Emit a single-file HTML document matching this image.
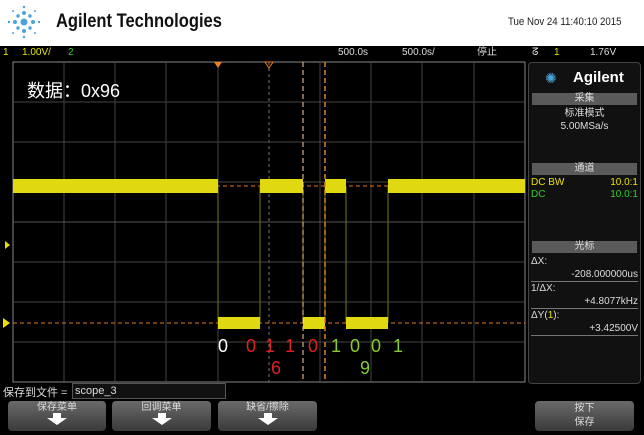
<!DOCTYPE html>
<html><head><meta charset="utf-8"><style>
body{margin:0;width:644px;height:435px;background:#fff;position:relative;overflow:hidden;font-family:"Liberation Sans","Noto Sans CJK SC",sans-serif}
.a{position:absolute}
.btn{position:absolute;top:401px;height:30px;background:linear-gradient(#6a6a6a,#3a3a3a);border-radius:4px;color:#ddd;font-size:10px;text-align:center;line-height:13px}
.arr{width:0;height:0;border-left:10px solid transparent;border-right:10px solid transparent;border-top:7px solid #fff;margin:4px auto 0;position:relative}
.arr:before{content:"";position:absolute;left:-4px;top:-12px;width:8px;height:5px;background:#fff}
.ph{background:#5a5a5a;color:#ddd;font-size:10px;text-align:center;height:12px;line-height:12px;margin:0 3px}
</style></head><body>
<svg class="a" style="left:6px;top:4px" width="36" height="36" viewBox="0 0 36 36">
<g fill="#4aa3d8"><circle cx="18" cy="18" r="3.5"/>
<circle cx="18" cy="9" r="2"/><circle cx="18" cy="27" r="2"/><circle cx="9" cy="18" r="2"/><circle cx="27" cy="18" r="2"/>
<circle cx="12" cy="12" r="1.7"/><circle cx="24" cy="12" r="1.7"/><circle cx="12" cy="24" r="1.7"/><circle cx="24" cy="24" r="1.7"/>
<circle cx="18" cy="3" r="1.2"/><circle cx="18" cy="33" r="1.2"/><circle cx="3" cy="18" r="1.2"/><circle cx="33" cy="18" r="1.2"/>
<circle cx="7" cy="7" r="1"/><circle cx="29" cy="7" r="1"/><circle cx="7" cy="29" r="1"/><circle cx="29" cy="29" r="1"/></g></svg>
<div class="a" style="left:56px;top:11px;font-size:19px;font-weight:bold;color:#111;transform:scaleX(0.87);transform-origin:0 0;white-space:nowrap">Agilent Technologies</div>
<div class="a" style="left:508px;top:16px;font-size:11px;color:#222;transform:scaleX(0.88);transform-origin:0 0;white-space:nowrap">Tue Nov 24 11:40:10 2015</div>
<div class="a" style="left:0;top:46px;width:644px;height:389px;background:#000"></div>
<div class="a" style="left:0;top:46px;width:644px;height:14px;font-size:10px;color:#ddd;line-height:14px">
<span class="a" style="left:3px;color:#e8e800">1</span><span class="a" style="left:22px;color:#e8e800">1.00V/</span><span class="a" style="left:68px;color:#3c3">2</span>
<span class="a" style="left:338px">500.0s</span><span class="a" style="left:402px">500.0s/</span><span class="a" style="left:477px">停止</span>
<span class="a" style="left:532px">ᘔ</span><span class="a" style="left:554px;color:#e8e800">1</span><span class="a" style="left:590px">1.76V</span></div>
<svg class="a" style="left:0;top:60px" width="530" height="325">
<rect x="13" y="2" width="512" height="320" fill="#000" stroke="#888" stroke-width="1"/>
<g stroke="#444" stroke-width="1">
<line x1="64" y1="2" x2="64" y2="322"/><line x1="115" y1="2" x2="115" y2="322"/><line x1="166" y1="2" x2="166" y2="322"/><line x1="218" y1="2" x2="218" y2="322"/><line x1="269" y1="2" x2="269" y2="322" stroke-dasharray="3 3" stroke="#777"/><line x1="320" y1="2" x2="320" y2="322"/><line x1="371" y1="2" x2="371" y2="322"/><line x1="422" y1="2" x2="422" y2="322"/><line x1="474" y1="2" x2="474" y2="322"/>
<line x1="13" y1="42" x2="525" y2="42"/><line x1="13" y1="82" x2="525" y2="82"/><line x1="13" y1="122" x2="525" y2="122"/><line x1="13" y1="162" x2="525" y2="162" stroke="#555"/><line x1="13" y1="202" x2="525" y2="202"/><line x1="13" y1="242" x2="525" y2="242"/><line x1="13" y1="282" x2="525" y2="282"/>
</g>
<g stroke="#777700" stroke-width="1"><line x1="218" y1="126" x2="218" y2="263"/><line x1="260" y1="126" x2="260" y2="263"/><line x1="303" y1="126" x2="303" y2="263"/><line x1="325" y1="126" x2="325" y2="263"/><line x1="346" y1="126" x2="346" y2="263"/><line x1="388" y1="126" x2="388" y2="263"/></g>
<g stroke="#e07a20" stroke-dasharray="4 3"><line x1="13" y1="126" x2="525" y2="126"/><line x1="13" y1="263" x2="525" y2="263"/></g>
<g fill="#e0d810"><rect x="13" y="119" width="205" height="14"/><rect x="260" y="119" width="43" height="14"/><rect x="325" y="119" width="21" height="14"/><rect x="388" y="119" width="137" height="14"/>
<rect x="218" y="257" width="42" height="12"/><rect x="303" y="257" width="22" height="12"/><rect x="346" y="257" width="42" height="12"/></g>
<line x1="303" y1="2" x2="303" y2="322" stroke="#ffcc99" stroke-dasharray="5 3"/>
<line x1="325" y1="2" x2="325" y2="322" stroke="#e08020" stroke-dasharray="5 3" stroke-width="1.5"/>
<path d="M214 2 L222 2 L218 8Z" fill="#f08020"/><path d="M265 2 L273 2 L269 8Z" fill="none" stroke="#f08020"/>
<path d="M5 181 L10 185 L5 189Z" fill="#e8e000"/><path d="M3 258 L10 263 L3 268Z" fill="#e8e000"/>
</svg>
<div class="a" style="left:27px;top:77px;font-size:18px;color:#fff">数据：0x96</div>
<div class="a" style="left:0;top:336px;font-size:18px;line-height:20px">
<span class="a" style="left:218px;color:#fff">0</span><span class="a" style="left:246px;color:#e02020">0</span><span class="a" style="left:265px;color:#e02020">1</span><span class="a" style="left:285px;color:#e02020">1</span><span class="a" style="left:308px;color:#e02020">0</span><span class="a" style="left:331px;color:#8c3">1</span><span class="a" style="left:350px;color:#8c3">0</span><span class="a" style="left:371px;color:#8c3">0</span><span class="a" style="left:393px;color:#8c3">1</span>
<span class="a" style="left:271px;top:22px;color:#e02020">6</span><span class="a" style="left:360px;top:22px;color:#8c3">9</span></div>
<div class="a" style="left:528px;top:62px;width:111px;height:320px;background:#111;border:1px solid #444;border-radius:4px;font-size:10px;color:#ddd">
<div style="height:30px;position:relative"><span class="a" style="left:16px;top:7px;color:#4aa3d8;font-size:14px">✺</span><span class="a" style="left:44px;top:6px;font-size:15px;font-weight:bold;color:#fff">Agilent</span></div>
<div class="ph">采集</div>
<div style="text-align:center;line-height:13px;margin-top:2px">标准模式<br>5.00MSa/s</div>
<div style="height:30px"></div>
<div class="ph">通道</div>
<div style="line-height:12px;padding:2px 2px 0 2px;color:#e8e000">DC BW<span style="float:right">10.0:1</span></div>
<div style="line-height:12px;padding:0 2px;color:#3c3">DC<span style="float:right">10.0:1</span></div>
<div style="height:40px"></div>
<div class="ph">光标</div>
<div style="padding:2px 2px 0;line-height:13px">ΔX:<div style="text-align:right;border-bottom:1px solid #777">-208.000000us</div>1/ΔX:<div style="text-align:right;border-bottom:1px solid #777">+4.8077kHz</div>ΔY(<span style="color:#e8e000">1</span>):<div style="text-align:right;border-bottom:1px solid #777">+3.42500V</div></div>
</div>
<div class="a" style="left:3px;top:384px;font-size:11px;color:#ddd">保存到文件 =</div>
<div class="a" style="left:72px;top:383px;width:150px;height:14px;border:1px solid #555;background:#111;font-size:11px;color:#ddd;line-height:14px;padding-left:2px">scope_3</div>
<div class="btn" style="left:8px;width:98px">保存菜单<div class="arr"></div></div>
<div class="btn" style="left:112px;width:99px">回调菜单<div class="arr"></div></div>
<div class="btn" style="left:218px;width:99px">缺省/擦除<div class="arr"></div></div>
<div class="btn" style="left:535px;width:99px;line-height:14px;padding-top:1px;height:29px">按下<br>保存</div>
</body></html>
